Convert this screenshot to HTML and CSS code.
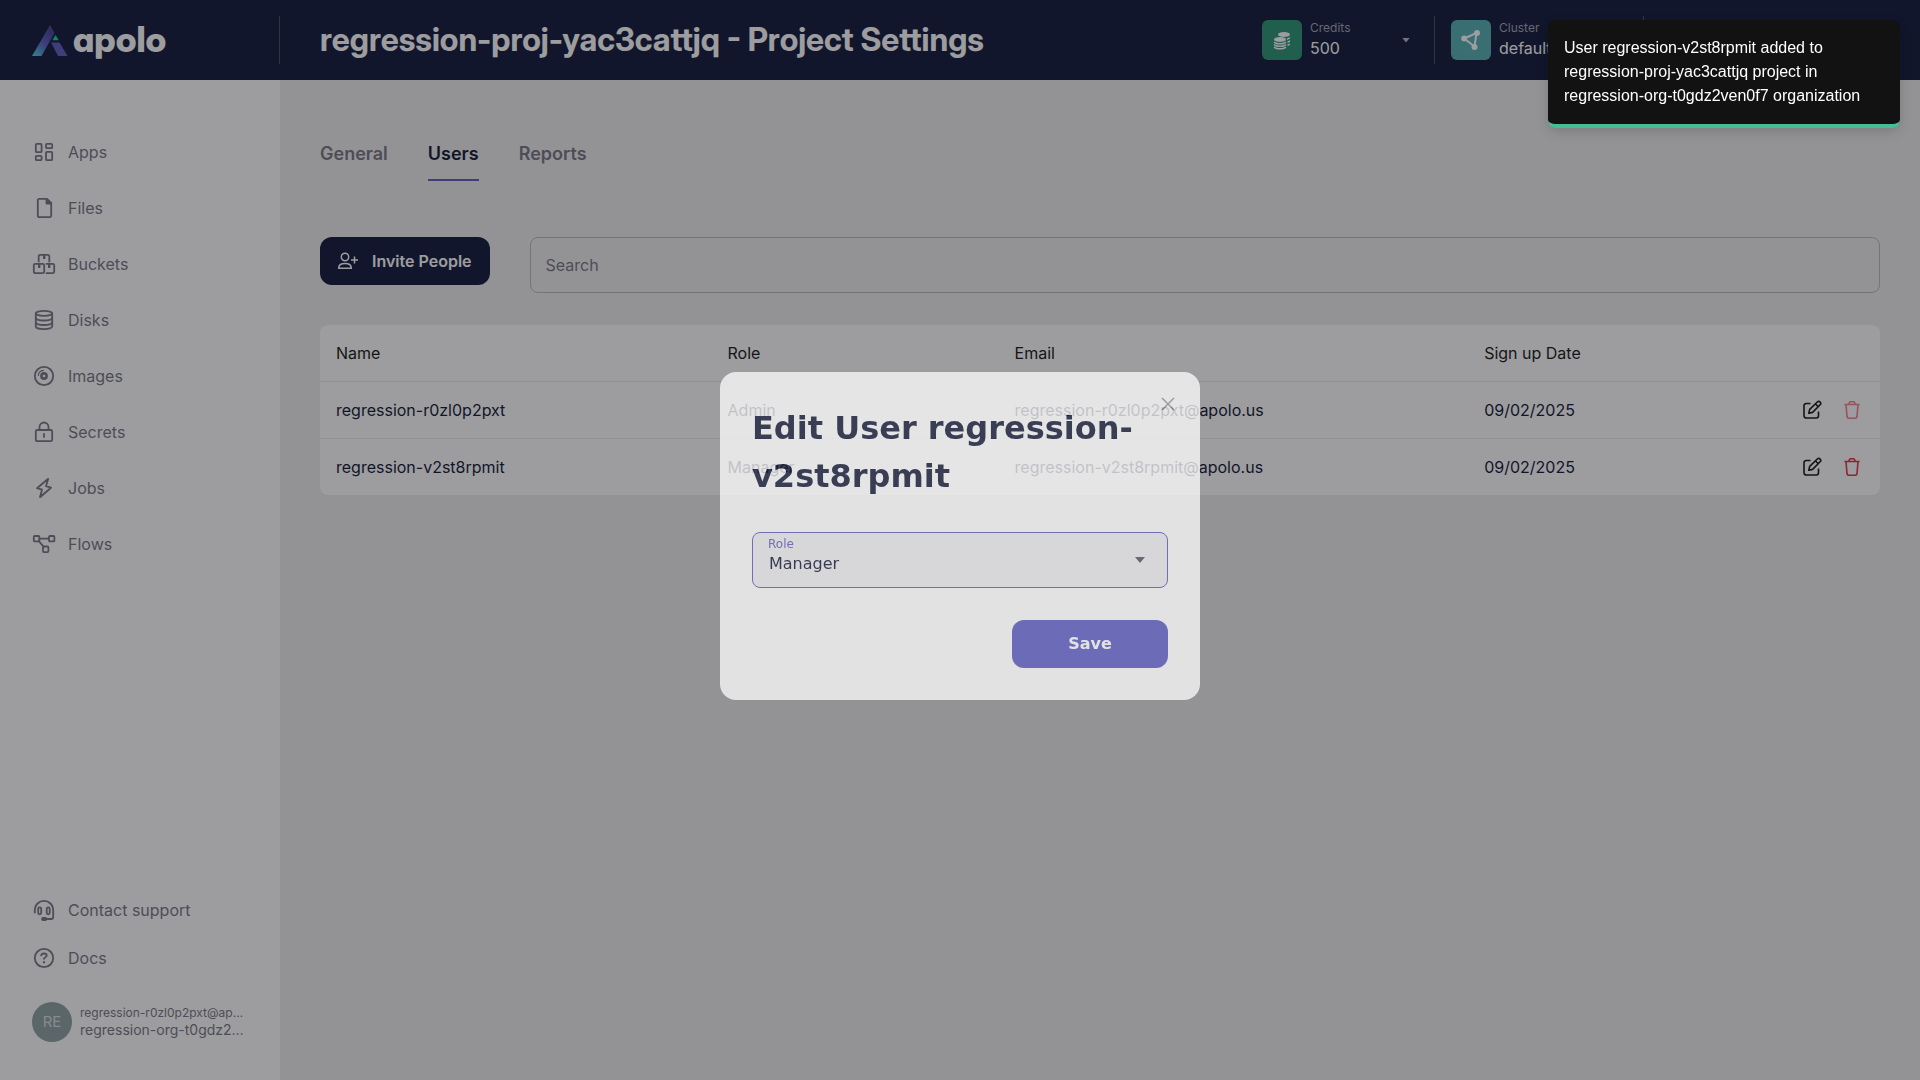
FILE: index.html
```html
<!DOCTYPE html>
<html lang="en">
<head>
<meta charset="utf-8">
<meta name="viewport" content="width=device-width, initial-scale=1">
<title>Project Settings</title>
<link rel="stylesheet" href="styles.css">
</head>
<body>
<div class="app">
  <header class="header">
    <div class="brand">
      <a class="logo" href="#">
        <svg class="logo-mark" viewBox="0 0 36 31" aria-hidden="true">
          <defs>
            <linearGradient id="leg" x1="0.1" y1="1" x2="0.7" y2="0.1">
              <stop offset="0" stop-color="#4bd0de"/>
              <stop offset="0.5" stop-color="#6165c6"/>
              <stop offset="1" stop-color="#4b469a"/>
            </linearGradient>
          </defs>
          <path d="M0 31 18 0l4.500 8L9.500 31z" fill="url(#leg)"/>
          <path d="M19 17.500h8.500L35.500 31H26z" fill="#6560c4"/>
          <path d="M23.500 10 26.700 15.300h-6.300z" fill="#0be09b"/>
        </svg>
        <span class="logo-text">apolo</span>
      </a>
    </div>
    <h1 class="page-title">regression-proj-yac3cattjq - Project Settings</h1>
    <div class="switchers">
      <button class="switcher" type="button">
        <span class="tile tile-credits">
          <svg width="20" height="20" viewBox="0 0 20 20" aria-hidden="true">
            <g fill="#fff">
              <ellipse cx="12" cy="4.500" rx="6" ry="2.600"/>
              <ellipse cx="8" cy="9.500" rx="6" ry="2.600"/>
            </g>
            <path d="M15 9.300q2.200-.600 2.800-1.800M15.500 12.300q1.800-.600 2.300-1.600M15.500 15.300q1.600-.500 2.200-1.400M2.200 11.900q.900 1.900 5.800 1.900t5.800-1.900M2.200 14.400q.900 1.900 5.800 1.900t5.800-1.900M2.200 16.900q.900 1.900 5.800 1.900t5.800-1.900" fill="none" stroke="#fff" stroke-width="1.500"/>
          </svg>
        </span>
        <span class="switcher-text"><small>Credits</small><span>500</span></span>
        <span class="caret caret-light"></span>
      </button>
      <button class="switcher" type="button">
        <span class="tile tile-cluster">
          <svg width="22" height="22" viewBox="0 0 22 22" aria-hidden="true">
            <path d="M4.200 9.500 16.500 4 14.500 17.500z" fill="none" stroke="#fff" stroke-width="2"/>
            <g fill="#fff"><circle cx="4.200" cy="9.500" r="3"/><circle cx="17" cy="4" r="3"/><circle cx="14.500" cy="18" r="3"/></g>
          </svg>
        </span>
        <span class="switcher-text"><small>Cluster</small><span>default</span></span>
      </button>
    </div>
  </header>

  <div class="body">
    <aside class="sidebar">
      <nav class="nav" aria-label="Main">
        <a href="#"><svg viewBox="0 0 24 24" class="icon"><rect x="3.800" y="3.800" width="5.800" height="8.400" rx="1"/><rect x="14" y="3.800" width="6.200" height="4.400" rx="1"/><rect x="3.800" y="15.800" width="5.800" height="4.400" rx="1"/><rect x="14" y="11.800" width="6.200" height="8.400" rx="1"/></svg>Apps</a>
        <a href="#"><svg viewBox="0 0 24 24" class="icon"><path d="M7.500 2.800H15l4.200 4.200v12.700a1.500 1.500 0 0 1-1.500 1.500H7.300a1.500 1.500 0 0 1-1.500-1.500V4.300a1.500 1.500 0 0 1 1.700-1.500z"/><path d="M14.500 3.500v4h4z" fill="currentColor"/></svg>Files</a>
        <a href="#"><svg viewBox="0 0 24 24" class="icon"><path d="M6.700 9.500V4.300a1.500 1.500 0 0 1 1.500-1.500h7.600a1.500 1.500 0 0 1 1.500 1.500v5.200M14.500 11.800h6.200a1.500 1.500 0 0 1 1.500 1.500v6.400a1.500 1.500 0 0 1-1.500 1.500h-6.200"/><rect x="1.800" y="11.800" width="10.400" height="9.400" rx="1.500"/><path d="M11 3h2.400v4H11zM6 12h2.400v4H6zM16 12h2.400v4H16z" fill="currentColor" stroke="none"/></svg>Buckets</a>
        <a href="#"><svg viewBox="0 0 24 24" class="icon"><path d="M3.800 5.500v13c0 1.500 3.600 2.700 8.200 2.700s8.200-1.200 8.200-2.700v-13"/><ellipse cx="12" cy="5.300" rx="8.200" ry="2.500"/><path d="M3.800 10c0 1.400 3.600 2.500 8.200 2.500s8.200-1.100 8.200-2.500M3.800 14.500c0 1.400 3.600 2.500 8.200 2.500s8.200-1.100 8.200-2.500"/></svg>Disks</a>
        <a href="#"><svg viewBox="0 0 24 24" class="icon"><circle cx="12" cy="12" r="9.200"/><circle cx="12" cy="12" r="2.600" stroke-width="2.600"/><path d="M6.300 11.500a5.600 5.600 0 0 1 5.200-5.200" stroke-width="1.200"/></svg>Images</a>
        <a href="#"><svg viewBox="0 0 24 24" class="icon"><rect x="3.800" y="10" width="16.400" height="11.200" rx="1.500"/><path d="M7.500 10V7a4.500 4.500 0 0 1 9 0v3M12 14v3"/></svg>Secrets</a>
        <a href="#"><svg viewBox="0 0 24 24" class="icon"><path d="M16.200 2.800 5 12.200l5 1.500-2 7.500 11-9.500-5-1.500z"/></svg>Jobs</a>
        <a href="#"><svg viewBox="0 0 24 24" class="icon"><rect x="1.800" y="4" width="5.600" height="5.400" rx="1"/><rect x="17" y="4" width="5.400" height="5.400" rx="1"/><rect x="11" y="14.500" width="5.400" height="5.600" rx="1"/><path d="M7.400 6.700H17M6.800 9.200l5 5.600"/></svg>Flows</a>
      </nav>
      <div class="sidebar-foot">
        <a class="foot-link" href="#"><svg viewBox="0 0 24 24" class="icon"><path d="M2.800 14.500V12a9.200 9.200 0 0 1 18.400 0v7a2 2 0 0 1-2 2H14"/><rect x="6.200" y="9.300" width="3" height="7" rx="1.500"/><rect x="14.700" y="9.300" width="3" height="7" rx="1.500"/><rect x="10" y="19.800" width="4.400" height="2.200" rx="1.100" fill="currentColor"/></svg>Contact support</a>
        <a class="foot-link" href="#"><svg viewBox="0 0 24 24" class="icon"><circle cx="12" cy="12" r="9.200"/><path d="M9.200 9.400c.300-1.400 1.400-1.900 2.800-1.900 1.600 0 2.700.800 2.700 2 0 1.700-2.700 1.600-2.700 3.300"/><path d="M12 16.200v.3" stroke-width="2.200"/></svg>Docs</a>
        <div class="user">
          <span class="avatar">RE</span>
          <div class="user-text">
            <span class="user-mail">regression-r0zl0p2pxt@apolo.us</span>
            <span class="user-org">regression-org-t0gdz2ven0f7</span>
          </div>
        </div>
      </div>
    </aside>

    <main class="content">
      <nav class="tabs" aria-label="Settings">
        <a href="#">General</a>
        <a href="#" class="active">Users</a>
        <a href="#">Reports</a>
      </nav>
      <div class="toolbar">
        <button class="invite" type="button">
          <svg width="24" height="24" viewBox="0 0 24 24" fill="none" stroke="currentColor" stroke-width="1.500" aria-hidden="true"><circle cx="9" cy="8" r="3.700"/><path d="M2.700 19.200c0-3.200 2-4.700 6.300-4.700s6.300 1.500 6.300 4.700zM18.500 7.500v7M15 11h7"/></svg>
          Invite People
        </button>
        <input class="search" type="search" placeholder="Search" aria-label="Search">
      </div>
      <table class="users">
        <colgroup><col class="col-name"><col class="col-role"><col class="col-email"><col></colgroup>
        <thead>
          <tr><th>Name</th><th>Role</th><th>Email</th><th colspan="2">Sign up Date</th></tr>
        </thead>
        <tbody>
          <tr>
            <td>regression-r0zl0p2pxt</td><td>Admin</td><td>regression-r0zl0p2pxt@apolo.us</td><td>09/02/2025</td>
            <td><div class="actions">
              <button type="button" aria-label="Edit"><svg viewBox="0 0 20 20" class="act"><path d="M8.500 3.500H4.200A2.200 2.200 0 0 0 2 5.700v10.100A2.200 2.200 0 0 0 4.200 18h10.100a2.200 2.200 0 0 0 2.200-2.200v-4.300"/><path d="M6.800 13.300l.900-3.900 7.600-7.400a1.900 1.900 0 0 1 2.800 2.800l-7.500 7.600zM13.500 4l2.700 2.700"/></svg></button>
              <button type="button" class="danger" aria-label="Delete" disabled><svg viewBox="0 0 20 20" class="act"><path d="M2.500 4.500h15M4 4.500l1 12.200a1.700 1.700 0 0 0 1.700 1.500h6.600a1.700 1.700 0 0 0 1.700-1.500l1-12.200M6.700 4.300l.900-2a1 1 0 0 1 .900-.600h3a1 1 0 0 1 .9.600l.9 2"/></svg></button>
            </div></td>
          </tr>
          <tr>
            <td>regression-v2st8rpmit</td><td>Manager</td><td>regression-v2st8rpmit@apolo.us</td><td>09/02/2025</td>
            <td><div class="actions">
              <button type="button" aria-label="Edit"><svg viewBox="0 0 20 20" class="act"><path d="M8.500 3.500H4.200A2.200 2.200 0 0 0 2 5.700v10.100A2.200 2.200 0 0 0 4.200 18h10.100a2.200 2.200 0 0 0 2.200-2.200v-4.300"/><path d="M6.800 13.300l.900-3.900 7.600-7.400a1.900 1.900 0 0 1 2.800 2.800l-7.500 7.600zM13.500 4l2.700 2.700"/></svg></button>
              <button type="button" class="danger" aria-label="Delete"><svg viewBox="0 0 20 20" class="act"><path d="M2.500 4.500h15M4 4.500l1 12.200a1.700 1.700 0 0 0 1.700 1.500h6.600a1.700 1.700 0 0 0 1.700-1.500l1-12.200M6.700 4.300l.900-2a1 1 0 0 1 .900-.600h3a1 1 0 0 1 .9.600l.9 2"/></svg></button>
            </div></td>
          </tr>
        </tbody>
      </table>
    </main>
  </div>
</div>

<div class="backdrop"></div>
<div class="modal-layer">
  <form class="modal" role="dialog" aria-labelledby="modal-title">
    <button class="close" type="button" aria-label="Close"><svg width="24" height="24" viewBox="0 0 24 24" fill="none" stroke="currentColor" stroke-width="1.500"><path d="M6 6l12 12M18 6 6 18"/></svg></button>
    <h2 class="modal-title" id="modal-title">Edit User regression-v2st8rpmit</h2>
    <div class="field">
      <label for="role">Role</label>
      <select id="role"><option>Manager</option><option>Admin</option></select>
      <span class="caret caret-dark"></span>
    </div>
    <button class="save" type="button">Save</button>
  </form>
</div>

<div class="toast" role="status">User regression-v2st8rpmit added to regression-proj-yac3cattjq project in regression-org-t0gdz2ven0f7 organization</div>
</body>
</html>
```

FILE: styles.css
```css
* {
  box-sizing: border-box;
}

body {
  margin: 0;
  font: 16px/24px Inter, "Liberation Sans", sans-serif;
  color: #171d3b;
  background: #efeff0;
}

a {
  color: inherit;
  text-decoration: none;
}

button {
  padding: 0;
  border: 0;
  background: none;
  color: inherit;
  font: inherit;
}

.app {
  display: flex;
  flex-direction: column;
  min-height: 100vh;
}

/* Header */
.header {
  display: flex;
  align-items: center;
  height: 80px;
  background: #171f40;
  color: #fff;
}

.brand {
  display: flex;
  align-items: center;
  width: 280px;
  height: 48px;
  padding-left: 32px;
  border-right: 1px solid #4d5168;
}

.logo {
  display: flex;
  align-items: center;
  gap: 5px;
}

.logo-mark {
  width: 36px;
  height: 31px;
}

.logo-text {
  padding-bottom: 2px;
  font-family: "Inter Display", Inter, sans-serif;
  font-size: 35px;
  font-weight: 800;
  line-height: 40px;
  font-feature-settings: "cv11";
}

.page-title {
  flex: 1;
  margin: 0;
  padding-left: 40px;
  font-family: "Inter Display", Inter, sans-serif;
  font-size: 32px;
  font-weight: 700;
  line-height: 40px;
}

.switchers {
  display: flex;
  padding-right: 276px;
}

.switcher {
  display: flex;
  align-items: center;
  gap: 8px;
  height: 48px;
  padding: 0 24px 0 16px;
  border-right: 1px solid #4d5168;
  text-align: left;
}

.switcher:nth-child(1) {
  width: 189px;
}

.switcher:nth-child(2) {
  width: 209px;
}

.tile {
  display: flex;
  align-items: center;
  justify-content: center;
  width: 40px;
  height: 40px;
  border-radius: 6px;
}

.tile-credits {
  background: #2f9677;
}

.tile-cluster {
  background: #59b2b5;
}

.switcher-text {
  display: flex;
  flex: 1;
  flex-direction: column;
  padding-bottom: 5px;
  line-height: 20px;
}

.switcher-text small {
  color: #a4a5b1;
  font-size: 12px;
}

.caret {
  width: 8px;
  height: 5px;
  clip-path: polygon(0 0, 100% 0, 50% 100%);
}

.caret-light {
  background: #bbbbc4;
}

/* Sidebar */
.body {
  display: flex;
  flex: 1;
}

.sidebar {
  display: flex;
  flex-direction: column;
  justify-content: space-between;
  width: 280px;
  padding: 44px 32px 38px;
  background: #fff;
  color: #7a7b88;
}

.nav,
.sidebar-foot {
  display: flex;
  flex-direction: column;
}

.nav a,
.foot-link {
  display: flex;
  align-items: center;
  gap: 12px;
  height: 56px;
}

.foot-link {
  height: 48px;
}

.icon {
  width: 24px;
  height: 24px;
  fill: none;
  stroke: currentColor;
  stroke-width: 1.8;
  stroke-linecap: round;
  stroke-linejoin: round;
}

.user {
  display: flex;
  align-items: center;
  gap: 8px;
  margin-top: 20px;
}

.avatar {
  display: flex;
  flex: none;
  align-items: center;
  justify-content: center;
  width: 40px;
  height: 40px;
  border-radius: 50%;
  background: #92a3a5;
  color: #dcdfe4;
  font-size: 15px;
}

.user-text {
  display: flex;
  flex-direction: column;
  min-width: 0;
  padding-bottom: 2px;
  line-height: 17px;
}

.user-text span {
  overflow: hidden;
  white-space: nowrap;
  text-overflow: ellipsis;
}

.user-mail {
  font-size: 12px;
}

.user-org {
  font-size: 14px;
}

/* Content */
.content {
  flex: 1;
  min-width: 0;
  padding: 60px 40px;
}

.tabs {
  display: flex;
  gap: 40px;
  font-size: 18px;
  font-weight: 600;
  line-height: 28px;
  color: #7a7b88;
}

.tabs a {
  padding-bottom: 11px;
  border-bottom: 2px solid transparent;
}

.tabs .active {
  color: #171d3b;
  border-color: #6560c4;
}

.toolbar {
  display: flex;
  align-items: flex-start;
  gap: 40px;
  margin: 56px 0 32px;
}

.invite {
  display: flex;
  align-items: center;
  gap: 12px;
  height: 48px;
  padding: 0 18px 0 16px;
  border-radius: 12px;
  background: #171f40;
  color: #fff;
  font-weight: 600;
}

.search {
  flex: 1;
  height: 56px;
  padding: 0 15px;
  border: 1px solid #bcbcc0;
  border-radius: 8px;
  outline: 0;
  background: transparent;
  font: inherit;
}

.search::placeholder {
  color: #7a7b88;
  opacity: 1;
}

.users {
  width: 100%;
  border-collapse: separate;
  border-spacing: 0;
  border-radius: 8px;
  background: #fff;
  table-layout: fixed;
}

.col-name {
  width: 25.1%;
}

.col-role {
  width: 18.4%;
}

.col-email {
  width: 30.1%;
}

.users th,
.users td {
  height: 56px;
  padding: 0 16px;
  text-align: left;
  font-weight: 400;
}

.users th {
  color: #1c1c20;
}

.users tr:not(:last-child) td,
.users th {
  height: 57px;
  border-bottom: 1px solid #ebebed;
}

.actions {
  display: flex;
  justify-content: flex-end;
  gap: 20px;
  padding-right: 2px;
  color: #1c1c20;
}

.actions button {
  width: 20px;
  height: 20px;
}

.act {
  display: block;
  width: 20px;
  height: 20px;
  fill: none;
  stroke: currentColor;
  stroke-width: 1.6;
  stroke-linejoin: round;
}

.actions .danger {
  color: #e0394d;
}

.actions .danger:disabled {
  color: #ed8890;
}

/* Dialog */
.backdrop,
.modal-layer {
  position: fixed;
  inset: 0;
}

.backdrop {
  background: rgba(10, 10, 14, 0.4);
}

.modal-layer {
  display: flex;
  align-items: center;
  justify-content: center;
  padding-bottom: 8px;
}

.modal {
  position: relative;
  display: flex;
  flex-direction: column;
  gap: 32px;
  width: 480px;
  padding: 32px;
  border-radius: 16px;
  background: #fff;
  opacity: 0.74;
  will-change: opacity, transform;
  font-family: "DejaVu Sans", sans-serif;
}

.close {
  position: absolute;
  top: 20px;
  right: 20px;
  width: 24px;
  height: 24px;
  color: #9a9ba5;
}

.modal-title {
  margin: 0;
  font-size: 32px;
  font-weight: 700;
  line-height: 48px;
}

.field {
  position: relative;
}

.field label {
  position: absolute;
  top: 4px;
  left: 16px;
  color: #6560c4;
  font-size: 12px;
  line-height: 16px;
}

.field select {
  display: block;
  width: 100%;
  height: 56px;
  padding: 8px 16px 0;
  border: 1px solid #6560c4;
  border-radius: 8px;
  outline: 0;
  background: #f0f0f2;
  color: inherit;
  font: inherit;
  appearance: none;
}

.field .caret {
  position: absolute;
  top: 25px;
  right: 23px;
  width: 10px;
  height: 6px;
}

.caret-dark {
  background: #5a5b68;
}

.save {
  align-self: flex-end;
  width: 156px;
  height: 48px;
  border-radius: 12px;
  background: #5f5dc5;
  color: #fff;
  font-weight: 700;
}

/* Notification */
.toast {
  position: fixed;
  top: 20px;
  right: 20px;
  width: 352px;
  padding: 16px;
  border-bottom: 4px solid #44bd96;
  border-radius: 8px;
  background: #121212;
  box-shadow: 0 4px 12px rgba(0, 0, 0, 0.15);
  color: #fff;
  font-family: "Liberation Sans", sans-serif;
}
```
